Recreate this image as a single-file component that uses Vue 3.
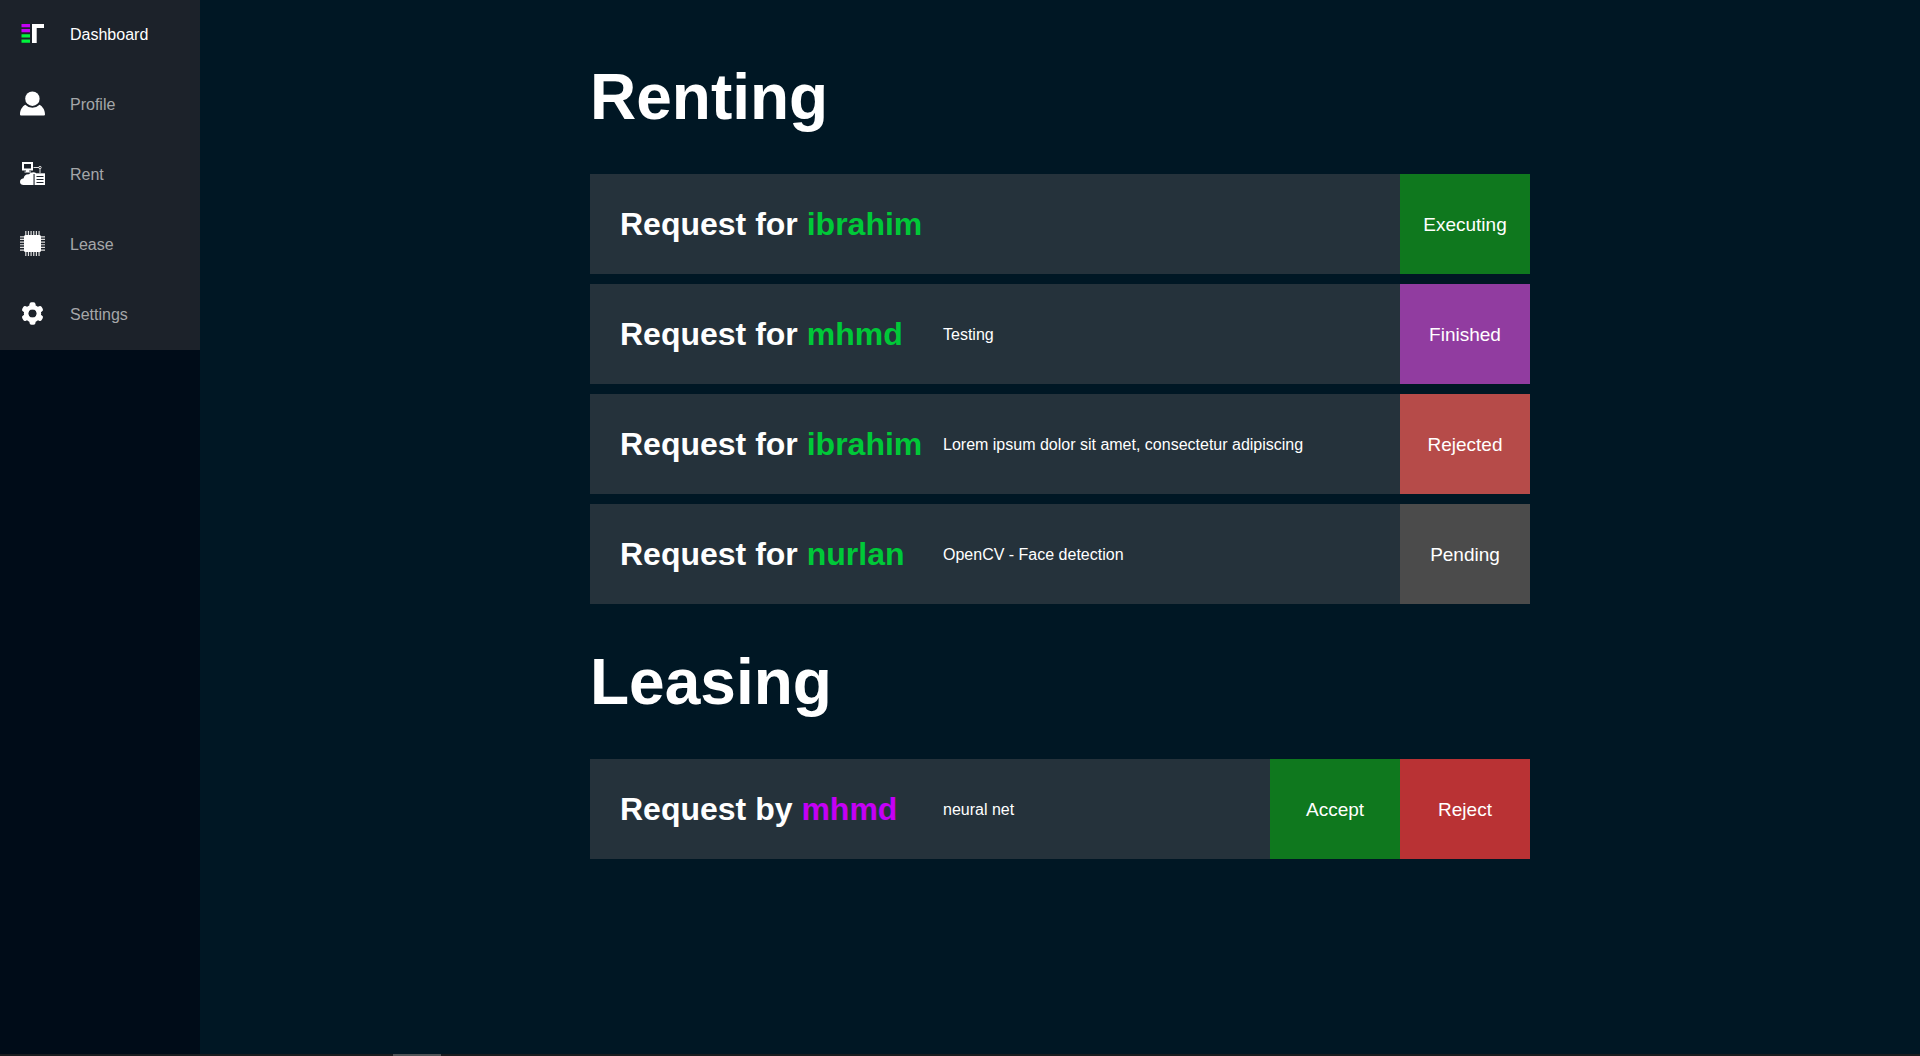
<script setup>
const links = [
  { id: 'dashboard', label: 'Dashboard', active: true },
  { id: 'profile', label: 'Profile' },
  { id: 'rent', label: 'Rent' },
  { id: 'lease', label: 'Lease' },
  { id: 'settings', label: 'Settings' },
]

const renting = [
  { user: 'ibrahim', note: '', status: 'Executing' },
  { user: 'mhmd', note: 'Testing', status: 'Finished' },
  { user: 'ibrahim', note: 'Lorem ipsum dolor sit amet, consectetur adipiscing', status: 'Rejected' },
  { user: 'nurlan', note: 'OpenCV - Face detection', status: 'Pending' },
]

const leasing = [{ user: 'mhmd', note: 'neural net' }]

const pins = [0, 1, 2, 3, 4, 5].map((n) => 5.2 + n * 2.65)
const teeth = [0, 60, 120, 180, 240, 300]
</script>

<template>
  <div class="page">
    <div class="body">
      <aside class="sidebar">
        <nav>
          <a v-for="link in links" :key="link.id" href="#" class="link" :class="{ active: link.active }">
            <svg class="icon" viewBox="0 0 25 25" aria-hidden="true">
              <g v-if="link.id === 'dashboard'">
                <path fill="#c400f5" d="M1.5 3h8.5v3.3H1.5zM1.5 8h8.5v3.3H1.5z" />
                <path fill="#00f53c" d="M1.5 13.2h8.5v3.3H1.5zM1.5 18.5h8.5v3.3H1.5z" />
                <path fill="#fff" d="M12 3h12v4h-7.300v15H12z" />
              </g>
              <g v-else-if="link.id === 'profile'" fill="#fff">
                <circle cx="12.400" cy="7.700" r="7.200" />
                <path d="M5.200 13.800Q8.300 16.800 12.400 16.800T19.600 13.800C22.500 15.500 25 19 25 23.500Q25 24.500 24 24.500H1Q0 24.500 0 23.500C0 19 2.300 15.500 5.200 13.800z" />
              </g>
              <g v-else-if="link.id === 'rent'">
                <path fill="none" stroke="#fff" stroke-width="2" d="M3 2h9v6.500H3z" />
                <path fill="#fff" d="M6 9h3.200v1.500H11V11.500H4.500V10.500H6z" />
                <path fill="none" stroke="#ddd" d="M13.500 6.500h5.500M20 7.500V12" />
                <circle cx="20" cy="6.500" r="1.200" fill="none" stroke="#ddd" />
                <path fill="#fff" d="M3.500 24H13.500V13H16V12C14 10.500 10.500 11 9 13.300C6 12.800 3.800 15 3.700 17.300C1.200 17.700 0 19 0 21C0 23 1.500 24 3.500 24z" />
                <path fill="#fff" d="M14.600 12.300H25V24H14.600z" />
                <path stroke="#1c222a" stroke-width="1.200" d="M16.500 15.500h7M16.500 18.500h7M16.500 21.500h7" />
              </g>
              <g v-else-if="link.id === 'lease'">
                <g stroke="#ddd" stroke-width="1.200">
                  <path v-for="p in pins" :key="p" :d="`M${p + 0.6} 0V25M0 ${p + 0.6}H25`" />
                </g>
                <rect x="4" y="4" width="17" height="17" rx="1.500" fill="#fff" />
              </g>
              <g v-else fill="#fff">
                <rect v-for="t in teeth" :key="t" x="9.500" y="1.300" width="6" height="7" rx="2" :transform="`rotate(${t} 12.500 12.500)`" />
                <circle cx="12.500" cy="12.500" r="6.400" fill="none" stroke="#fff" stroke-width="4.600" />
              </g>
            </svg>
            <span>{{ link.label }}</span>
          </a>
        </nav>
      </aside>

      <main class="main">
        <div class="content">
          <section>
            <h1>Renting</h1>
            <ul class="list">
              <li v-for="(item, i) in renting" :key="i" class="row">
                <h2>Request for <span class="tenant">{{ item.user }}</span></h2>
                <p>{{ item.note }}</p>
                <div class="tile" :class="item.status.toLowerCase()">{{ item.status }}</div>
              </li>
            </ul>
          </section>
          <section>
            <h1>Leasing</h1>
            <ul class="list">
              <li v-for="(item, i) in leasing" :key="i" class="row">
                <h2>Request by <span class="owner">{{ item.user }}</span></h2>
                <p>{{ item.note }}</p>
                <button type="button" class="tile accept">Accept</button>
                <button type="button" class="tile reject">Reject</button>
              </li>
            </ul>
          </section>
        </div>
      </main>
    </div>
    <footer class="strip"><span class="marker"></span></footer>
  </div>
</template>

<style>
body {
  margin: 0;
  background: #001724;
}
</style>

<style scoped>
.page {
  display: flex;
  flex-direction: column;
  min-height: 100vh;
  font-family: "Liberation Sans", Arial, sans-serif;
  font-size: 16px;
  color: #fff;
}

.body {
  display: flex;
  flex: 1;
}

.sidebar {
  flex: 0 0 200px;
  background: #000c18;
}

.link {
  display: flex;
  align-items: center;
  gap: 25px;
  box-sizing: border-box;
  height: 70px;
  padding: 0 20px;
  background: #1c222a;
  color: #a5a7a9;
  text-decoration: none;
}

.link.active {
  color: #fff;
}

.icon {
  width: 25px;
  height: 25px;
  margin-bottom: 4px;
}

.main {
  flex: 1;
  padding: 19px 40px;
}

.content {
  max-width: 940px;
  margin: 0 auto;
}

h1 {
  margin: 0;
  padding: 42px 0 41px;
  font-size: 64px;
  line-height: 72px;
}

.list {
  display: flex;
  flex-direction: column;
  gap: 10px;
  margin: 0;
  padding: 0;
  list-style: none;
}

.row {
  display: flex;
  align-items: center;
  min-height: 100px;
  background: #25323b;
}

h2 {
  flex: 0 0 323px;
  margin: 0;
  padding-left: 30px;
  box-sizing: border-box;
  flex-basis: 353px;
  font-size: 32px;
  line-height: 36px;
  white-space: nowrap;
}

p {
  flex: 1;
  margin: 0;
  padding-top: 2px;
}

.tenant {
  color: #00c838;
}

.owner {
  color: #c400f5;
}

.tile {
  display: flex;
  flex: 0 0 130px;
  box-sizing: border-box;
  align-items: center;
  justify-content: center;
  align-self: stretch;
  padding: 2px 0 0;
  border: 0;
  font: inherit;
  font-size: 19px;
  color: #fff;
}

.executing,
.accept {
  background: #0f781e;
}

.finished {
  background: #913ca0;
}

.rejected {
  background: #b64b49;
}

.pending {
  background: #4b4b4b;
}

.reject {
  background: #b93234;
}

button {
  cursor: pointer;
}

.strip {
  display: flex;
  height: 2px;
  background: #1a1c1f;
}

.marker {
  width: 48px;
  margin-left: 393px;
  background: #505356;
}
</style>
